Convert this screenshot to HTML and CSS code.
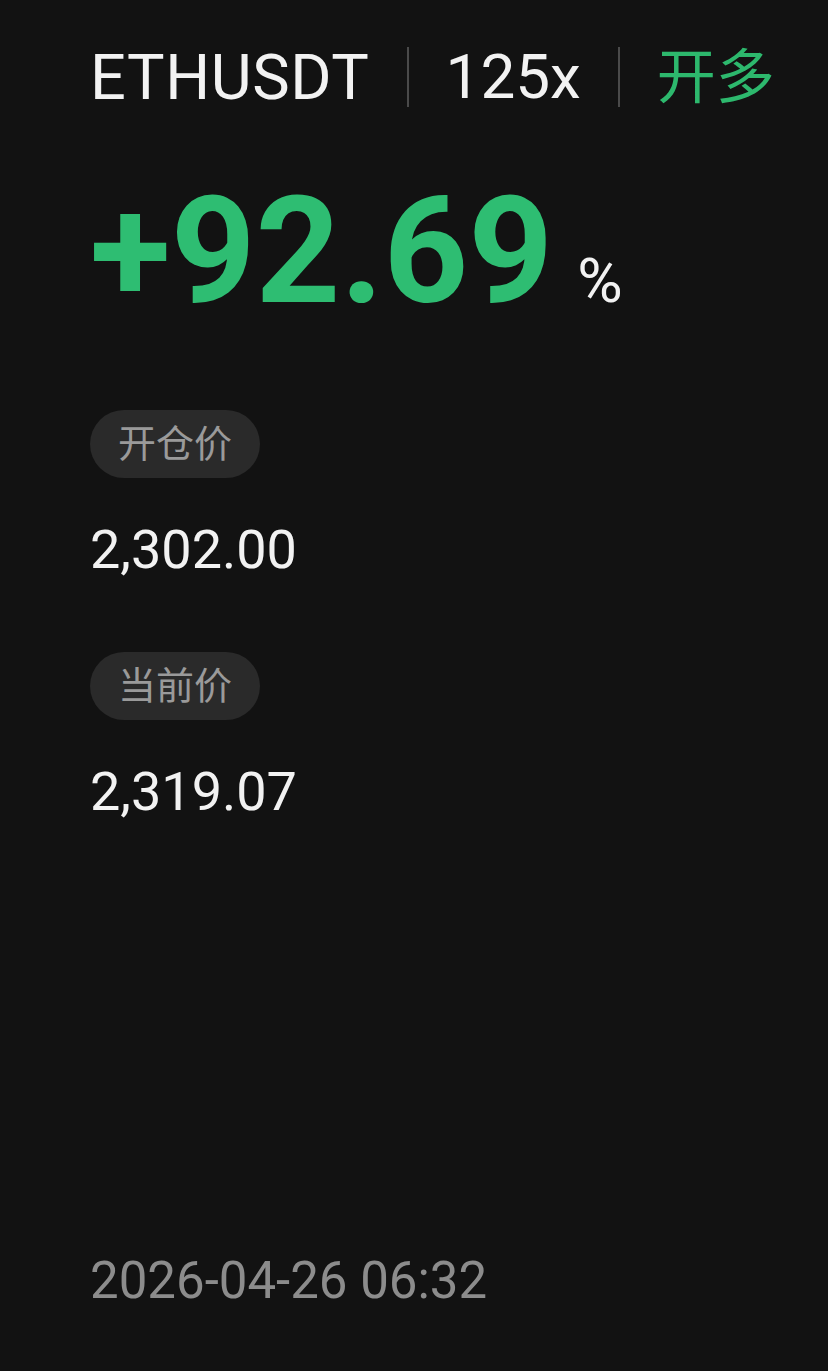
FILE: index.html
```html
<!DOCTYPE html>
<html lang="zh-CN">
<head>
  <meta charset="UTF-8" />
  <meta name="viewport" content="width=device-width, initial-scale=1.0" />
  <title>ETHUSDT 收益分享</title>
  <link rel="stylesheet" href="styles.css">
</head>
<body>
  <div class="card">
    <div class="header">
      <span class="symbol">ETHUSDT</span>
      <span class="divider"></span>
      <span class="leverage">125x</span>
      <span class="divider"></span>
      <span class="side">开多</span>
    </div>

    <div class="pnl">
      <span class="pnl-value">+92.69</span>
      <span class="pnl-unit">%</span>
    </div>

    <div class="field">
      <span class="tag">开仓价</span>
      <div class="price">2,302.00</div>
    </div>

    <div class="field">
      <span class="tag">当前价</span>
      <div class="price">2,319.07</div>
    </div>

    <div class="time">2026-04-26 06:32</div>
  </div>
</body>
</html>
```

FILE: styles.css
```css
html, body {
  margin: 0;
  height: 100%;
}
body {
  font-family: Roboto, "Noto Sans CJK SC", sans-serif;
  background: #121212;
  color: #f2f2f2;
}
.card {
  display: flex;
  flex-direction: column;
  box-sizing: border-box;
  height: 100%;
  padding: 40px 0 65px 90px;
}
.header {
  display: flex;
  align-items: center;
  gap: 37px;
  height: 74px;
}
.symbol {
  font-size: 63px;
  line-height: 1;
  letter-spacing: 0.6px;
}
.leverage {
  font-size: 62px;
  line-height: 1;
}
.side {
  font-size: 59px;
  line-height: 1;
  color: #2db86d;
}
.divider {
  width: 2px;
  height: 60px;
  background: #4a4a4a;
}
.pnl {
  display: flex;
  align-items: baseline;
  gap: 24px;
  margin-top: 64px;
}
.pnl-value {
  font-size: 148px;
  font-weight: 700;
  line-height: 1;
  color: #2ebd72;
}
.pnl-unit {
  font-size: 62px;
  line-height: 1;
}
.field {
  display: flex;
  flex-direction: column;
  align-items: flex-start;
  margin-top: 84px;
}
.field + .field {
  margin-top: 75px;
}
.tag {
  padding: 0 28px;
  height: 68px;
  line-height: 68px;
  border-radius: 34px;
  background: #2a2a2a;
  color: #9a9a9a;
  font-size: 38px;
}
.price {
  margin-top: 45px;
  font-size: 54px;
  line-height: 1;
}
.time {
  margin-top: auto;
  font-size: 51px;
  line-height: 1;
  color: #8c8c8c;
}
```
